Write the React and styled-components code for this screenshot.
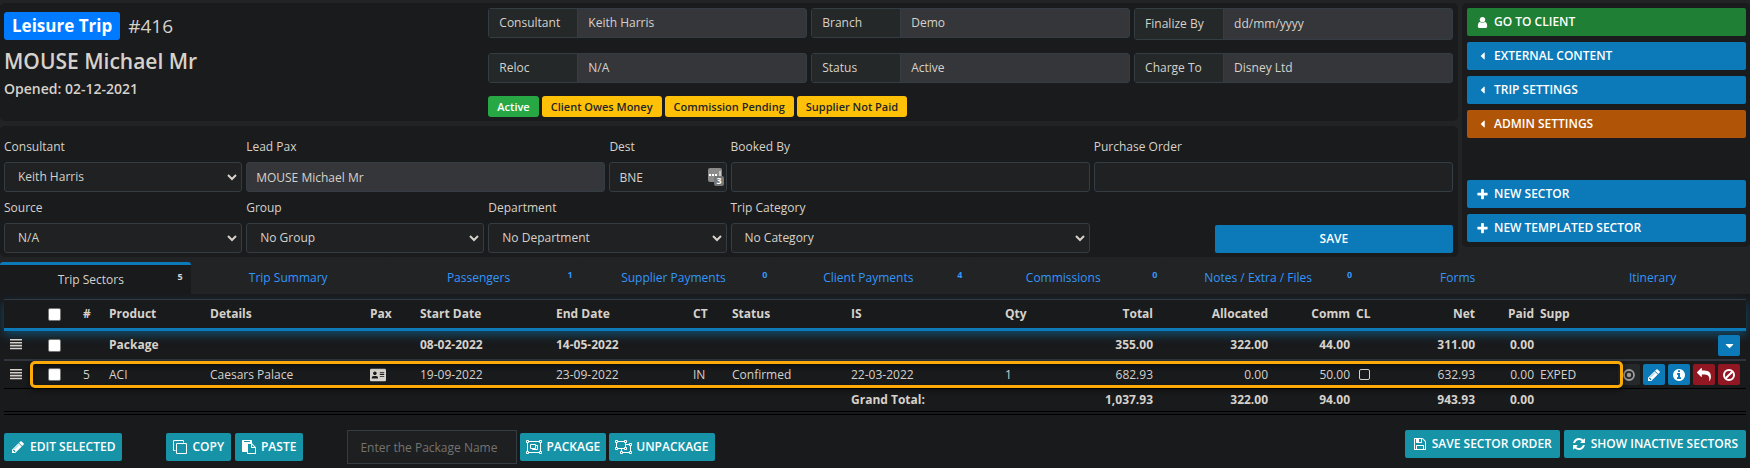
import { useState } from "react"
import styled, { createGlobalStyle } from "styled-components"
import { FaAddressCard, FaCaretDown, FaCaretLeft } from "react-icons/fa"

const paths = {
  user: "M1536 1399q0 109-62.5 187t-150.5 78h-854q-88 0-150.5-78t-62.5-187q0-85 8.5-160.5t31.5-152 58.5-131 94-89 134.5-34.5q131 128 313 128t313-128q76 0 134.5 34.5t94 89 58.5 131 31.5 152 8.5 160.5zm-256-887q0 159-112.5 271.5t-271.5 112.5-271.5-112.5-112.5-271.5 112.5-271.5 271.5-112.5 271.5 112.5 112.5 271.5z",
  plus: "M1600 736v192q0 40-28 68t-68 28h-416v416q0 40-28 68t-68 28h-192q-40 0-68-28t-28-68v-416h-416q-40 0-68-28t-28-68v-192q0-40 28-68t68-28h416v-416q0-40 28-68t68-28h192q40 0 68 28t28 68v416h416q40 0 68 28t28 68z",
  pencil: "M491 1536l91-91-235-235-91 91v107h128v128h107zm523-928q0-22-22-22-10 0-17 7l-542 542q-7 7-7 17 0 22 22 22 10 0 17-7l542-542q7-7 7-17zm-54-192l416 416-832 832h-416v-416zm683 96q0 53-37 90l-166 166-416-416 166-165q36-38 90-38 53 0 91 38l235 234q37 39 37 91z",
  clone: "M1664 1632v-1088q0-13-9.5-22.5t-22.5-9.5h-1088q-13 0-22.5 9.5t-9.5 22.5v1088q0 13 9.5 22.5t22.5 9.5h1088q13 0 22.5-9.5t9.5-22.5zm128-1088v1088q0 66-47 113t-113 47h-1088q-66 0-113-47t-47-113v-1088q0-66 47-113t113-47h1088q66 0 113 47t47 113zm-384-384v160h-128v-160q0-13-9.5-22.5t-22.5-9.5h-1088q-13 0-22.5 9.5t-9.5 22.5v1088q0 13 9.5 22.5t22.5 9.5h160v128h-160q-66 0-113-47t-47-113v-1088q0-66 47-113t113-47h1088q66 0 113 47t47 113z",
  paste: "M768 1664h896v-640h-416q-40 0-68-28t-28-68v-416h-384v1152zm256-1440v-64q0-13-9.5-22.5t-22.5-9.5h-704q-13 0-22.5 9.5t-9.5 22.5v64q0 13 9.5 22.5t22.5 9.5h704q13 0 22.5-9.5t9.5-22.5zm256 672h299l-299-299v299zm512 128v672q0 40-28 68t-68 28h-960q-40 0-68-28t-28-68v-160h-544q-40 0-68-28t-28-68v-1344q0-40 28-68t68-28h1088q40 0 68 28t28 68v328q21 13 36 28l408 408q28 28 48 76t20 88z",
  save: "M512 1536h768v-384h-768v384zm896 0h128v-896q0-14-10-38.5t-20-34.5l-281-281q-10-10-34-20t-39-10v416q0 40-28 68t-68 28h-576q-40 0-68-28t-28-68v-416h-128v1280h128v-416q0-40 28-68t68-28h832q40 0 68 28t28 68v416zm-384-928v-320q0-13-9.5-22.5t-22.5-9.5h-192q-13 0-22.5 9.5t-9.5 22.5v320q0 13 9.5 22.5t22.5 9.5h192q13 0 22.5-9.5t9.5-22.5zm640 32v928q0 40-28 68t-68 28h-1344q-40 0-68-28t-28-68v-1344q0-40 28-68t68-28h928q40 0 88 20t76 48l280 280q28 28 48 76t20 88z",
  refresh: "M1639 1056q0 5-1 7-64 268-268 434.5t-478 166.5q-146 0-282.5-55t-243.5-157l-129 129q-19 19-45 19t-45-19-19-45v-448q0-26 19-45t45-19h448q26 0 45 19t19 45-19 45l-137 137q71 66 161 102t187 36q134 0 250-65t186-179q11-17 53-117 8-23 30-23h192q13 0 22.5 9.5t9.5 22.5zm25-800v448q0 26-19 45t-45 19h-448q-26 0-45-19t-19-45 19-45l138-138q-148-137-349-137-134 0-250 65t-186 179q-11 17-53 117-8 23-30 23h-199q-13 0-22.5-9.5t-9.5-22.5v-7q65-268 270-434.5t480-166.5q146 0 284 55.5t245 156.5l130-129q19-19 45-19t45 19 19 45z",
  info: "M1152 1376v-160q0-14-9-23t-23-9h-96v-512q0-14-9-23t-23-9h-320q-14 0-23 9t-9 23v160q0 14 9 23t23 9h96v320h-96q-14 0-23 9t-9 23v160q0 14 9 23t23 9h448q14 0 23-9t9-23zm-128-896v-160q0-14-9-23t-23-9h-192q-14 0-23 9t-9 23v160q0 14 9 23t23 9h192q14 0 23-9t9-23zm640 416q0 209-103 385.5t-279.5 279.5-385.5 103-385.5-103-279.5-279.5-103-385.5 103-385.5 279.5-279.5 385.5-103 385.5 103 279.5 279.5 103 385.5z",
  reply: "M1792 1120q0 166-127 451-3 7-10.5 24t-13.5 30-13 22q-12 17-28 17-15 0-23.5-10t-8.5-25q0-9 2.5-26.5t2.5-23.5q5-68 5-123 0-112-19.5-200.5t-54-153.5-89-112-116-78.5-138.5-48-151.5-24.5-164.5-7h-224v256q0 26-19 45t-45 19-45-19l-512-512q-19-19-19-45t19-45l512-512q19-19 45-19t45 19 19 45v256h224q713 0 875 403 53 134 53 333z",
}

function Icon({ name, size = 14 }) {
  return (
    <svg width={size} height={size} viewBox="0 0 1792 1792" fill="currentColor" aria-hidden="true">
      <path d={paths[name]} />
    </svg>
  )
}

function GroupIcon() {
  return (
    <svg width="16" height="14" viewBox="0 0 16 14" fill="none" stroke="currentColor" aria-hidden="true">
      <path d="M2.5 1.5h11M2.5 12.5h11M1.5 2.5v9M14.5 2.5v9M4.5 4.5h5v4h-5zM9.5 5.5h2v4h-5v-1" />
      <path d="M.5.5h2v2h-2zM13.5.5h2v2h-2zM.5 11.5h2v2h-2zM13.5 11.5h2v2h-2z" />
    </svg>
  )
}

function UngroupIcon() {
  return (
    <svg width="17" height="14" viewBox="0 0 17 14" fill="none" stroke="currentColor" aria-hidden="true">
      <path d="M2.5 1.5h7M2.5 8.5h7M1.5 2.5v5M10.5 2.5v5M11 4.5h3M15.5 5.5v6M7.5 12.5h7M6.5 9v2" />
      <path d="M.5.5h2v2h-2zM9.5.5h2v2h-2zM.5 7.5h2v2h-2zM9.5 7.5h2v2h-2zM14.5 3.5h2v2h-2zM14.5 11.5h2v2h-2zM5.5 11.5h2v2h-2z" />
    </svg>
  )
}

function BarsIcon() {
  return (
    <svg width="12" height="12" viewBox="0 0 12 12" fill="currentColor" aria-hidden="true">
      <path d="M0 0h12v1.6H0zM0 2.9h12v1.6H0zM0 5.8h12v1.6H0zM0 8.7h12v1.6H0z" />
    </svg>
  )
}

function BanIcon() {
  return (
    <svg width="12" height="12" viewBox="0 0 12 12" fill="none" stroke="currentColor" strokeWidth="2" aria-hidden="true">
      <circle cx="6" cy="6" r="5" />
      <path d="M9.3 2.7L2.7 9.3" />
    </svg>
  )
}

function DotIcon() {
  return (
    <svg width="12" height="12" viewBox="0 0 12 12" fill="none" stroke="currentColor" aria-hidden="true">
      <circle cx="6" cy="6" r="5" strokeWidth="1.8" />
      <circle cx="6" cy="6" r="2.2" fill="currentColor" stroke="none" />
    </svg>
  )
}

const tabs = [
  { name: "Trip Sectors", count: 5 },
  { name: "Trip Summary" },
  { name: "Passengers", count: 1 },
  { name: "Supplier Payments", count: 0 },
  { name: "Client Payments", count: 4 },
  { name: "Commissions", count: 0 },
  { name: "Notes / Extra / Files", count: 0 },
  { name: "Forms" },
  { name: "Itinerary" },
]

const columns = [41, 35, 26, 101, 160, 50, 136, 137, 39, 119, 154, 40, 114, 115, 82, 27, 98, 59, 85, 124]

function ReadOnlyField({ id, label, value, tall }) {
  return (
    <InputGroup $tall={tall}>
      <label htmlFor={id}>{label}</label>
      <input id={id} defaultValue={value} readOnly />
    </InputGroup>
  )
}

function SelectField({ id, label, value, span }) {
  return (
    <Field $span={span}>
      <label htmlFor={id}>{label}</label>
      <SelectBox>
        <select id={id}>
          <option>{value}</option>
        </select>
        <svg width="10" height="7" viewBox="0 0 10 7" fill="none" stroke="currentColor" strokeWidth="2" aria-hidden="true">
          <path d="M1 1l4 4 4-4" />
        </svg>
      </SelectBox>
    </Field>
  )
}

export default function App() {
  const [activeTab, setActiveTab] = useState("Trip Sectors")

  return (
    <>
      <GlobalStyle />
      <TopArea>
        <MainColumn>
          <Card>
            <Grid>
              <TripTitle>
                <h1><TripType>Leisure Trip</TripType> #416</h1>
                <h2>MOUSE Michael Mr</h2>
                <h3>Opened: 02-12-2021</h3>
              </TripTitle>
              <TripInfo>
                <ReadOnlyField id="info-consultant" label="Consultant" value="Keith Harris" />
                <ReadOnlyField id="info-branch" label="Branch" value="Demo" />
                <ReadOnlyField id="info-finalize" label="Finalize By" value="dd/mm/yyyy" tall />
                <ReadOnlyField id="info-reloc" label="Reloc" value="N/A" />
                <ReadOnlyField id="info-status" label="Status" value="Active" />
                <ReadOnlyField id="info-charge" label="Charge To" value="Disney Ltd" />
                <Badges>
                  <Badge $green>Active</Badge>
                  <Badge>Client Owes Money</Badge>
                  <Badge>Commission Pending</Badge>
                  <Badge>Supplier Not Paid</Badge>
                </Badges>
              </TripInfo>
            </Grid>
          </Card>

          <Card as="form" onSubmit={(e) => e.preventDefault()}>
            <FormGrid>
              <SelectField id="consultant" label="Consultant" value="Keith Harris" span={2} />
              <Field $span={3}>
                <label htmlFor="lead-pax">Lead Pax</label>
                <TextInput id="lead-pax" defaultValue="MOUSE Michael Mr" readOnly />
              </Field>
              <Field $span={1}>
                <label htmlFor="dest">Dest</label>
                <DestBox>
                  <TextInput id="dest" defaultValue="BNE" />
                  <svg width="16" height="18" viewBox="0 0 16 18" aria-hidden="true">
                    <rect width="14" height="14" rx="2" fill="#8b8b8b" />
                    <path d="M1 6h2v2H1zM4 6h2v2H4zM7 6h2v2H7zM11.5 3h1v5h-1z" fill="#fff" />
                    <rect x="6" y="8" width="10" height="10" rx="2" fill="#777" />
                    <text x="11" y="16" textAnchor="middle" fontSize="9" fontWeight="700" fill="#fff">3</text>
                  </svg>
                </DestBox>
              </Field>
              <Field $span={3}>
                <label htmlFor="booked-by">Booked By</label>
                <TextInput id="booked-by" />
              </Field>
              <Field $span={3}>
                <label htmlFor="purchase-order">Purchase Order</label>
                <TextInput id="purchase-order" />
              </Field>
              <SelectField id="source" label="Source" value="N/A" span={2} />
              <SelectField id="group" label="Group" value="No Group" span={2} />
              <SelectField id="department" label="Department" value="No Department" span={2} />
              <SelectField id="category" label="Trip Category" value="No Category" span={3} />
              <SaveButton type="submit">SAVE</SaveButton>
            </FormGrid>
          </Card>
        </MainColumn>

        <SideMenu>
          <SideButton $color="#1f8035"><Icon name="user" size={13} />GO TO CLIENT</SideButton>
          <SideButton><FaCaretLeft size={12} />EXTERNAL CONTENT</SideButton>
          <SideButton><FaCaretLeft size={12} />TRIP SETTINGS</SideButton>
          <SideButton $color="#b05508"><FaCaretLeft size={12} />ADMIN SETTINGS</SideButton>
          <SideGroup>
            <SideButton><Icon name="plus" size={13} />NEW SECTOR</SideButton>
            <SideButton><Icon name="plus" size={13} />NEW TEMPLATED SECTOR</SideButton>
          </SideGroup>
        </SideMenu>
      </TopArea>

      <Tabs>
        {tabs.map((tab) => (
          <Tab key={tab.name} $active={tab.name === activeTab} onClick={() => setActiveTab(tab.name)}>
            <span>{tab.name}</span>
            {tab.count !== undefined && <sup>{tab.count}</sup>}
          </Tab>
        ))}
      </Tabs>

      <Content>
        <SectorTable>
          <colgroup>
            {columns.map((width, index) => <col key={index} width={width} />)}
          </colgroup>
          <thead>
            <tr>
              <th></th>
              <th><Check type="checkbox" aria-label="Select all" /></th>
              <th>#</th>
              <th>Product</th>
              <th>Details</th>
              <th>Pax</th>
              <th>Start Date</th>
              <th>End Date</th>
              <th>CT</th>
              <th>Status</th>
              <th>IS</th>
              <th>Qty</th>
              <Num as="th">Total</Num>
              <Num as="th">Allocated</Num>
              <Num as="th">Comm</Num>
              <th>CL</th>
              <Num as="th">Net</Num>
              <Num as="th">Paid</Num>
              <th>Supp</th>
              <th></th>
            </tr>
          </thead>
          <tbody>
            <PackageRow>
              <Handle><BarsIcon /></Handle>
              <td><Check type="checkbox" aria-label="Select package" /></td>
              <td></td>
              <td>Package</td>
              <td></td>
              <td></td>
              <td>08-02-2022</td>
              <td>14-05-2022</td>
              <td></td>
              <td></td>
              <td></td>
              <td></td>
              <Num>355.00</Num>
              <Num>322.00</Num>
              <Num>44.00</Num>
              <td></td>
              <Num>311.00</Num>
              <Num>0.00</Num>
              <td></td>
              <td>
                <Actions>
                  <ActionButton aria-label="More"><FaCaretDown size={13} /></ActionButton>
                </Actions>
              </td>
            </PackageRow>
            <SectorRow>
              <Handle><BarsIcon /></Handle>
              <td><Check type="checkbox" aria-label="Select sector 5" /></td>
              <td>5</td>
              <td>ACI</td>
              <td>Caesars Palace</td>
              <td><FaAddressCard size={16} /></td>
              <td>19-09-2022</td>
              <td>23-09-2022</td>
              <td>IN</td>
              <td>Confirmed</td>
              <td>22-03-2022</td>
              <td>1</td>
              <Num>682.93</Num>
              <Num>0.00</Num>
              <Num>50.00</Num>
              <td><Check type="checkbox" aria-label="CL" $hollow /></td>
              <Num>632.93</Num>
              <Num>0.00</Num>
              <td>EXPED</td>
              <td>
                <Actions>
                  <ActionButton aria-label="Select" $color="#25292c" $muted><DotIcon /></ActionButton>
                  <ActionButton aria-label="Edit"><Icon name="pencil" /></ActionButton>
                  <ActionButton aria-label="Info"><Icon name="info" /></ActionButton>
                  <ActionButton aria-label="Revert" $color="#911823"><Icon name="reply" /></ActionButton>
                  <ActionButton aria-label="Cancel" $color="#911823"><BanIcon /></ActionButton>
                </Actions>
                <Highlight />
              </td>
            </SectorRow>
          </tbody>
          <tfoot>
            <tr>
              <td colSpan={10}></td>
              <td colSpan={2}>Grand Total:</td>
              <Num>1,037.93</Num>
              <Num>322.00</Num>
              <Num>94.00</Num>
              <td></td>
              <Num>943.93</Num>
              <Num>0.00</Num>
              <td colSpan={2}></td>
            </tr>
          </tfoot>
        </SectorTable>

        <Toolbar>
          <ToolButton><Icon name="pencil" />EDIT SELECTED</ToolButton>
          <ToolGroup>
            <ToolButton><Icon name="clone" />COPY</ToolButton>
            <ToolButton><Icon name="paste" />PASTE</ToolButton>
          </ToolGroup>
          <ToolGroup $tight>
            <PackageInput aria-label="Package name" placeholder="Enter the Package Name" />
            <ToolButton $tight><GroupIcon />PACKAGE</ToolButton>
            <ToolButton $tight><UngroupIcon />UNPACKAGE</ToolButton>
          </ToolGroup>
          <RightTools>
            <ToolButton $wide><Icon name="save" />SAVE SECTOR ORDER</ToolButton>
            <ToolButton $wide><Icon name="refresh" />SHOW INACTIVE SECTORS</ToolButton>
          </RightTools>
        </Toolbar>
      </Content>
    </>
  )
}

const GlobalStyle = createGlobalStyle`
* {
  box-sizing: border-box;
}

body {
  margin: 0;
  background: #191a1c;
  color: #d6d2cb;
  font-family: "Open Sans", "Noto Sans", sans-serif;
  font-size: 12px;
  line-height: 18px;
}

button, input, select {
  margin: 0;
  font: inherit;
  color: inherit;
}

svg {
  flex-shrink: 0;
}
`

const TopArea = styled.div`
  display: flex;
  align-items: flex-start;
  gap: 4px;
  padding-top: 3px;
  background: #222325;
`

const MainColumn = styled.div`
  flex: 1;
  min-width: 0;
  display: flex;
  flex-direction: column;
  gap: 5px;
`

const Card = styled.section`
  padding: 5px 5px 4px 4px;
  border-radius: 5px;
  background: #1a1b1d;
`

const Grid = styled.div`
  display: grid;
  grid-template-columns: repeat(12, minmax(0, 1fr));
  column-gap: 4px;
`

const FormGrid = styled(Grid)`
  padding-top: 7px;
  row-gap: 7px;
`

const TripTitle = styled.div`
  grid-column: span 4;
  padding-top: 4px;

  h1, h2, h3 {
    margin: 0;
  }

  h1 {
    display: flex;
    align-items: center;
    gap: 8px;
    font-size: 19px;
    line-height: 28px;
    font-weight: 400;
  }

  h2 {
    padding-top: 5px;
    font-size: 21px;
    line-height: 32px;
    font-weight: 600;
  }

  h3 {
    font-size: 14px;
    line-height: 24px;
    font-weight: 600;
  }
`

const TripType = styled.span`
  padding: 0 8px;
  border-radius: 3px;
  background: #007bff;
  color: #fff;
  font-size: 17px;
  font-weight: 700;
`

const TripInfo = styled.div`
  grid-column: span 8;
  display: grid;
  grid-template-columns: repeat(3, minmax(0, 1fr));
  align-items: start;
  column-gap: 4px;
  row-gap: 13px;
`

const InputGroup = styled.div`
  display: flex;
  height: ${(props) => (props.$tall ? 32 : 30)}px;
  border: 1px solid #343c44;
  border-radius: 3px;
  background: #35363a;

  label {
    width: 89px;
    display: flex;
    align-items: center;
    padding-left: 10px;
    border-right: 1px solid #343c44;
    background: #242829;
  }

  input {
    flex: 1;
    min-width: 0;
    padding: 0 10px;
    border: none;
    outline: none;
    background: none;
  }
`

const Badges = styled.div`
  grid-column: span 3;
  display: flex;
  gap: 3px;
`

const Badge = styled.span`
  padding: 0 9px;
  border-radius: 3px;
  background: ${(props) => (props.$green ? "#28a745" : "#ffc107")};
  color: ${(props) => (props.$green ? "#fff" : "#212529")};
  font-size: 11px;
  line-height: 21px;
  font-weight: 600;
`

const Field = styled.div`
  grid-column: span ${(props) => props.$span};

  label {
    display: block;
    padding-bottom: 6px;
  }
`

const TextInput = styled.input`
  display: block;
  width: 100%;
  height: 30px;
  padding: 0 9px;
  border: 1px solid #343c44;
  border-radius: 3px;
  background: #1f2122;

  &:read-only {
    background: #35363a;
  }
`

const DestBox = styled.div`
  position: relative;

  svg {
    position: absolute;
    right: 3px;
    top: 6px;
  }
`

const SelectBox = styled.div`
  position: relative;

  select {
    appearance: none;
    display: block;
    width: 100%;
    height: 30px;
    padding: 0 24px 0 13px;
    border: 1px solid #343c44;
    border-radius: 3px;
    background: #1f2122;
  }

  svg {
    position: absolute;
    right: 5px;
    top: 12px;
    pointer-events: none;
  }
`

const Button = styled.button`
  display: flex;
  align-items: center;
  height: 28px;
  border: none;
  border-radius: 2px;
  background: ${(props) => props.$color || "#0c79b8"};
  color: #fff;
  font-weight: 600;
  white-space: nowrap;
  cursor: pointer;
`

const SaveButton = styled(Button)`
  grid-column: 11 / span 2;
  align-self: end;
  justify-content: center;
`

const SideMenu = styled.aside`
  width: 288px;
  display: flex;
  flex-direction: column;
  gap: 6px;
  padding: 5px 4px 5px 5px;
  border-radius: 5px;
  background: #1a1b1d;
`

const SideButton = styled(Button)`
  gap: 5px;
  padding: 0 9px;

  svg {
    width: 13px;
  }
`

const SideGroup = styled.div`
  display: flex;
  flex-direction: column;
  gap: 6px;
  padding-top: 36px;
`

const Tabs = styled.nav`
  display: flex;
  height: 37px;
  padding-top: 5px;
  background: #222325;
`

const Tab = styled.button`
  flex: ${(props) => (props.$active ? "0 0 10.9%" : "1")};
  display: flex;
  align-items: flex-start;
  gap: 4px;
  padding: ${(props) => (props.$active ? "2px" : "3px")} 8px 0;
  border: none;
  border-top: ${(props) => (props.$active ? "3px solid #0c79b8" : "none")};
  border-radius: 3px 3px 0 0;
  background: ${(props) => (props.$active ? "#191a1c" : "#222325")};
  color: ${(props) => (props.$active ? "#d6d2cb" : "#3296fa")};
  line-height: 26px;
  cursor: pointer;

  span {
    flex: 1;
  }

  sup {
    font-size: 9px;
    line-height: 20px;
    font-weight: 700;
  }
`

const Content = styled.main`
  padding: 5px 4px;
`

const SectorTable = styled.table`
  width: 100%;
  table-layout: fixed;
  border-collapse: separate;
  border-spacing: 0;

  th, td {
    padding: 0 3px;
    text-align: left;
    white-space: nowrap;
  }

  td svg {
    display: block;
  }

  thead tr {
    height: 32px;
    box-shadow: 0 4px 10px rgba(12, 121, 184, 0.5);
  }

  th {
    border-top: 1px solid #343a43;
    border-bottom: 3px solid #0c79b8;
    font-weight: 700;
  }

  tfoot td {
    height: 26px;
    border-bottom: 4px double #000;
    font-weight: 700;
  }
`

const Num = styled.td`
  && {
    text-align: right;
  }
`

const Handle = styled.td`
  && {
    padding-left: 6px;
  }
`

const PackageRow = styled.tr`
  td {
    height: 30px;
    border-bottom: 2px solid #31353e;
    font-weight: 700;
  }
`

const SectorRow = styled.tr`
  position: relative;

  td {
    height: 28px;
    border-bottom: 1px solid #000;
  }
`

/* marks the sector that is being explained */
const Highlight = styled.span`
  position: absolute;
  top: 0;
  bottom: 1px;
  left: 26px;
  right: 123px;
  border: 3px solid #fcaa08;
  border-radius: 5px;
  box-shadow: 0 2px 5px rgba(0, 0, 0, 0.6), inset 0 2px 5px rgba(0, 0, 0, 0.5);
  pointer-events: none;
`

const Check = styled.input`
  appearance: none;
  display: block;
  width: ${(props) => (props.$hollow ? 11 : 13)}px;
  height: ${(props) => (props.$hollow ? 11 : 13)}px;
  margin-left: ${(props) => (props.$hollow ? 3 : 0)}px;
  border: 1px solid ${(props) => (props.$hollow ? "#d6d2cb" : "#767676")};
  border-radius: 2px;
  background: ${(props) => (props.$hollow ? "transparent" : "#fff")};
`

const Actions = styled.div`
  display: flex;
  justify-content: flex-end;
  gap: 3px;
  padding-right: 3px;
`

const ActionButton = styled(Button)`
  flex-shrink: 0;
  width: 22px;
  height: 21px;
  justify-content: center;
  padding: 0;
  color: ${(props) => (props.$muted ? "#a09d98" : "#fff")};
`

const Toolbar = styled.div`
  display: flex;
  align-items: center;
  gap: 44px;
  padding-top: 15px;
`

const ToolGroup = styled.div`
  display: flex;
  align-items: center;
  gap: ${(props) => (props.$tight ? 3 : 4)}px;
`

const ToolButton = styled(Button)`
  gap: ${(props) => (props.$tight ? 4 : 5)}px;
  padding: 0 ${(props) => (props.$wide ? 8 : props.$tight ? 6 : 7)}px;
  background: #1793a8;
`

const PackageInput = styled.input`
  width: 170px;
  height: 34px;
  padding: 0 12px;
  border: 1px solid #343c44;
  background: #1d1f20;

  &::placeholder {
    color: #75736f;
  }
`

const RightTools = styled(ToolGroup)`
  align-self: flex-start;
  margin-left: auto;
`
